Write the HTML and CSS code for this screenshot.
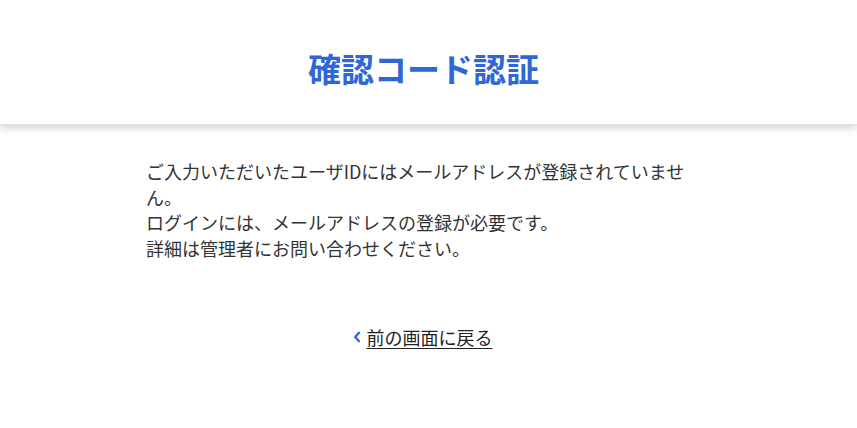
FILE: index.html
```html
<!DOCTYPE html>
<html lang="ja">
<head>
<meta charset="utf-8">
<title>確認コード認証</title>
<link rel="stylesheet" href="styles.css">
</head>
<body>
<header class="header">
  <h1 class="title">確認コード認証</h1>
</header>
<main class="main">
  <div class="message">
    <p>ご入力いただいたユーザIDにはメールアドレスが登録されていません。</p>
    <p>ログインには、メールアドレスの登録が必要です。</p>
    <p>詳細は管理者にお問い合わせください。</p>
  </div>
  <div class="back">
    <a class="back-link" href="#"><svg class="chev" width="8" height="12" viewBox="0 0 8 12"><path d="M6 1.8 L2.2 6 L6 10.2" fill="none" stroke="#3067d6" stroke-width="2.4" stroke-linecap="round" stroke-linejoin="round"/></svg><span class="back-text">前の画面に戻る</span></a>
  </div>
</main>
</body>
</html>
```
FILE: styles.css
```css
html, body {
  margin: 0;
  padding: 0;
  background: #fff;
}
body {
  font-family: "Noto Sans CJK JP", "Noto Sans", sans-serif;
  color: #333;
}
.header {
  height: 124px;
  display: flex;
  align-items: center;
  justify-content: center;
  background: #fff;
  box-shadow: 0 3px 8px rgba(0,0,0,0.18);
  position: relative;
  border-bottom: 1px solid #e2e2e2;
}
.title {
  margin: 0 10px 0 0;
  font-size: 33px;
  font-weight: 700;
  color: #3067d6;
  letter-spacing: 0;
  padding-top: 12px;
}
.main {
  width: 565px;
  margin: 0 auto;
  padding-top: 34px;
}
.message {
  max-width: 558px;
  font-size: 18px;
  line-height: 25.5px;
}
.message p {
  margin: 0;
}
.back {
  display: flex;
  justify-content: center;
  margin-top: 63px;
  padding-right: 12px;
}
.back-link {
  display: flex;
  align-items: center;
  gap: 6px;
  color: #222;
  text-decoration: none;
  font-size: 18px;
  line-height: 26px;
}
.back-text {
  text-decoration: underline;
  text-underline-offset: 3px;
}
.chev {
  display: block;
}
```
